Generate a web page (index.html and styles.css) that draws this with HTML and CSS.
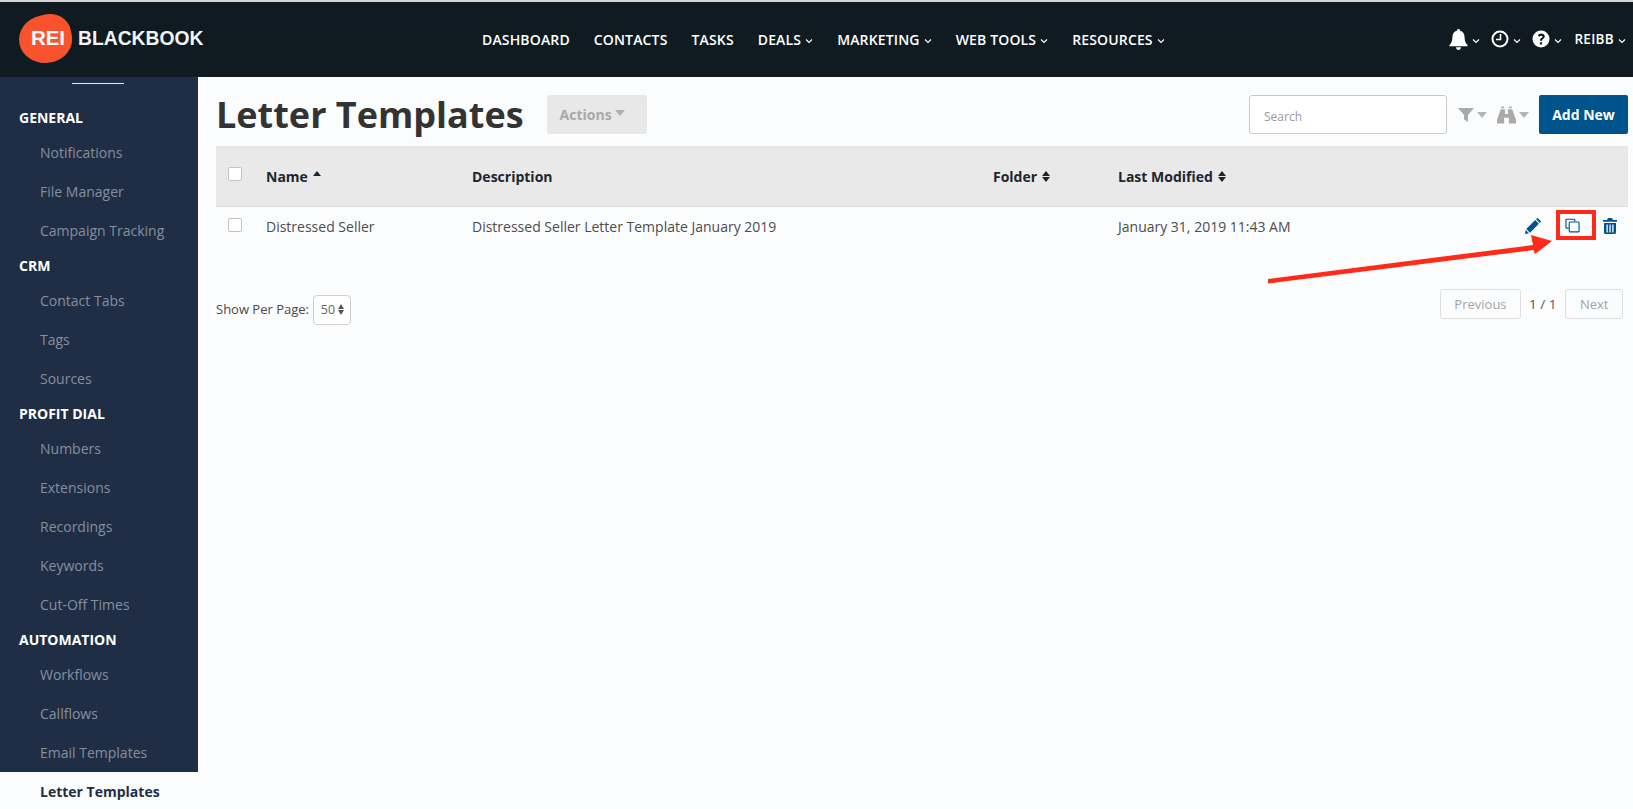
FILE: index.html
```html
<!DOCTYPE html>
<html lang="en">
<head>
<meta charset="utf-8">
<title>Letter Templates</title>
<link rel="stylesheet" href="styles.css">
</head>
<body>
<header class="topbar">
  <a class="logo">
    <span class="logo-badge"><span class="logo-rei">REI</span></span>
    <span class="logo-word">BLACKBOOK</span>
  </a>
  <nav class="mainnav">
    <a>DASHBOARD</a>
    <a>CONTACTS</a>
    <a>TASKS</a>
    <a>DEALS<svg class="chev" viewBox="0 0 8 6"><path d="M1 1.5 4 4.5 7 1.5"/></svg></a>
    <a>MARKETING<svg class="chev" viewBox="0 0 8 6"><path d="M1 1.5 4 4.5 7 1.5"/></svg></a>
    <a>WEB TOOLS<svg class="chev" viewBox="0 0 8 6"><path d="M1 1.5 4 4.5 7 1.5"/></svg></a>
    <a>RESOURCES<svg class="chev" viewBox="0 0 8 6"><path d="M1 1.5 4 4.5 7 1.5"/></svg></a>
  </nav>
  <div class="usernav">
    <a class="u-bell"><svg class="ico-bell" viewBox="0 0 20 22"><path d="M10 0c-1 0-1.600.7-1.600 1.700C5.200 2.500 3.600 5 3.600 8.500c0 4.500-1.300 6.400-3.100 8.200V18h19v-1.300c-1.800-1.800-3.100-3.700-3.100-8.200 0-3.500-1.600-6-4.800-6.800C11.600.7 11 0 10 0zM7.400 19.200c0 1.600 1.200 2.800 2.600 2.800s2.600-1.200 2.600-2.800z"/></svg><svg class="chev" viewBox="0 0 8 6"><path d="M1 1.5 4 4.5 7 1.5"/></svg></a>
    <a class="u-clock"><svg class="ico-round" viewBox="0 0 18 18"><circle class="ring" cx="9" cy="9" r="7.500"/><path class="hand" d="M9.500 4v5.500H5"/></svg><svg class="chev" viewBox="0 0 8 6"><path d="M1 1.5 4 4.500 7 1.5"/></svg></a>
    <a class="u-help"><svg class="ico-round" viewBox="0 0 18 18"><path fill-rule="evenodd" d="M9 .5a8.500 8.500 0 1 0 0 17 8.500 8.500 0 0 0 0-17zM7.900 12.300h2.200v2.200H7.900zM9.200 3.500c2 0 3.500 1.200 3.500 3 0 1.300-.7 2-1.600 2.600-.7.500-1 .8-1 1.600H7.900c0-1.400.5-2 1.400-2.600.8-.5 1.100-.8 1.100-1.400 0-.6-.5-1-1.200-1-.8 0-1.300.4-1.700 1.100L5.700 5.600C6.400 4.300 7.600 3.500 9.200 3.500z"/></svg><svg class="chev" viewBox="0 0 8 6"><path d="M1 1.500 4 4.500 7 1.500"/></svg></a>
    <a class="u-name">REIBB<svg class="chev" viewBox="0 0 8 6"><path d="M1 1.500 4 4.500 7 1.500"/></svg></a>
  </div>
</header>
<div class="shell">
  <aside class="sidebar">
    <div class="side-rule"></div>
    <h4>GENERAL</h4>
    <a>Notifications</a>
    <a>File Manager</a>
    <a>Campaign Tracking</a>
    <h4>CRM</h4>
    <a>Contact Tabs</a>
    <a>Tags</a>
    <a>Sources</a>
    <h4>PROFIT DIAL</h4>
    <a>Numbers</a>
    <a>Extensions</a>
    <a>Recordings</a>
    <a>Keywords</a>
    <a>Cut-Off Times</a>
    <h4>AUTOMATION</h4>
    <a>Workflows</a>
    <a>Callflows</a>
    <a>Email Templates</a>
    <a class="active">Letter Templates</a>
  </aside>
  <main class="content">
    <div class="titlebar">
      <h1>Letter Templates</h1>
      <button class="actions">Actions<span class="caret"></span></button>
      <div class="tools">
        <input class="search" placeholder="Search">
        <span class="tool"><svg class="ico-filter" viewBox="0 0 16 16"><path d="M0 1h16l-6 7v7l-4-2.500V8z"/></svg><span class="caret"></span></span>
        <span class="tool"><svg class="ico-bino" viewBox="0 0 20 18"><path d="M4.500 0h3v2h-3zM12.500 0h3v2h-3zM4 3h4.500v5h3V3H16l4 11v4h-7.500v-6h-5v6H0v-4z"/></svg><span class="caret"></span></span>
        <button class="addnew">Add New</button>
      </div>
    </div>
    <table class="grid">
      <colgroup><col class="c-check"><col class="c-name"><col class="c-desc"><col class="c-folder"><col class="c-mod"><col></colgroup>
      <thead>
        <tr>
          <th><span class="check"></span></th>
          <th><span class="thcell">Name<span class="sort-up"></span></span></th>
          <th>Description</th>
          <th><span class="thcell">Folder<span class="sort"><i></i><b></b></span></span></th>
          <th><span class="thcell">Last Modified<span class="sort"><i></i><b></b></span></span></th>
          <th></th>
        </tr>
      </thead>
      <tbody>
        <tr>
          <td><span class="check check-row"></span></td>
          <td>Distressed Seller</td>
          <td>Distressed Seller Letter Template January 2019</td>
          <td></td>
          <td>January 31, 2019 11:43 AM</td>
          <td>
            <div class="rowicons">
              <svg class="ico-pencil" viewBox="0 0 17 17"><path d="M12.500.8 16.200 4.500 14.800 5.900 11.100 2.200zM10.200 3.100 13.900 6.800 5 15.700 1.300 12zM.7 13 4 16.300 0 17z"/></svg>
              <svg class="ico-copy" viewBox="0 0 16 15"><path d="M10.500 3V1.800a1 1 0 0 0-1-1H2a1 1 0 0 0-1 1v7.500a1 1 0 0 0 1 1h2"/><rect x="4.500" y="3.800" width="10.500" height="10.500" rx="1"/></svg>
              <svg class="ico-trash" viewBox="0 0 14 16"><path fill-rule="evenodd" d="M5 0h4l1 2h4v1.800H0V2h4zM1 5h12v9.500c0 .8-.7 1.500-1.500 1.500h-9C1.700 16 1 15.300 1 14.500zM3.500 6.500v8h1.300v-8zM6.400 6.500v8h1.300v-8zM9.200 6.500v8h1.300v-8z"/></svg>
            </div>
          </td>
        </tr>
      </tbody>
    </table>
    <div class="pagerbar">
      <label class="perpage">Show Per Page:
        <span class="select">50<span class="sort"><i></i><b></b></span></span>
      </label>
      <div class="pager">
        <span class="pbtn">Previous</span>
        <span class="pcount">1 / 1</span>
        <span class="pbtn">Next</span>
      </div>
    </div>
  </main>
</div>
<div class="callout-box"></div>
<svg class="callout-arrow" viewBox="0 0 300 60"><path d="M1 45 266 11 264 1 285 7 268 20 266.500 16 1 49.500z"/></svg>
</body>
</html>
```
FILE: styles.css
```css
* { box-sizing: border-box; }
html, body { margin: 0; height: 100%; }
body {
  font-family: "Open Sans", sans-serif;
  font-size: 14px;
  color: #4a4a4a;
  background: #fbfcfe;
  overflow: hidden;
  position: relative;
}
a { color: inherit; text-decoration: none; }

.topbar {
  height: 77px;
  background: #101b21;
  border-top: 2px solid #d5d5d5;
  display: flex;
  align-items: center;
  color: #fff;
  padding: 0 7px 0 19px;
}
.logo { display: flex; align-items: center; width: 463px; margin-top: -1px; }
.logo-badge {
  position: relative;
  width: 53px;
  height: 48px;
  display: flex;
  align-items: center;
  justify-content: center;
  padding-left: 5px;
}
.logo-badge::before {
  content: "";
  position: absolute;
  inset: 0;
  background: #f9532d;
  border-radius: 50% 42% 48% 52%;
  transform: rotate(-12deg);
}
.logo-rei {
  position: relative;
  color: #fff;
  font: bold 20.500px "Liberation Sans", sans-serif;
  letter-spacing: -.1px;
  margin-bottom: 3px;
}
.logo-word {
  font: bold 19.300px "Liberation Sans", sans-serif;
  margin-left: 6px;
  margin-top: -1px;
  color: #f4f4f4;
}
.mainnav { display: flex; gap: 24px; font-size: 14px; font-weight: 600; letter-spacing: .15px; }
.mainnav a, .usernav a { display: flex; align-items: center; white-space: nowrap; }
.chev { width: 8px; height: 6px; margin-left: 4px; margin-top: 3px; fill: none; stroke: #fff; stroke-width: 1.100; }
.usernav { margin-left: auto; display: flex; align-items: center; gap: 11px; font-size: 13.500px; font-weight: 600; letter-spacing: .3px; margin-top: -1px; }
.usernav .u-name { margin-left: 1px; }
.usernav svg:not(.chev) { fill: #fff; }
.ico-bell { width: 19px; height: 21px; }
.ico-round { width: 18px; height: 18px; }
.usernav .ico-round .ring { fill: none; stroke: #fff; stroke-width: 2; }
.usernav .ico-round .hand { fill: none; stroke: #fff; stroke-width: 1.600; }

.shell { display: flex; height: calc(100% - 77px); }
.sidebar {
  width: 198px;
  flex: none;
  background: #1f2e45;
  color: #868e9c;
  display: flex;
  flex-direction: column;
}
.side-rule { flex: none; width: 52px; height: 1px; background: #e8e8e8; margin: 6px 0 0 72px; }
.sidebar h4 {
  flex: none;
  margin: 0;
  height: 31px;
  padding-left: 19px;
  font-size: 14px;
  line-height: 31px;
  font-weight: 700;
  color: #fff;
}
.sidebar h4:first-of-type { margin-top: 17.500px; }
.sidebar a {
  height: 39px;
  line-height: 39px;
  padding-left: 40px;
  font-size: 14px;
  flex: none;
}
.sidebar a.active { background: #fbfcfe; color: #1f2e45; font-weight: 700; }

.content { flex: 1; min-width: 0; padding: 18px 5px 0 18px; }
.titlebar { display: flex; align-items: center; height: 39px; }
h1 { margin: 0 23px 0 0; font-size: 36px; font-weight: 700; color: #333; line-height: 39px; letter-spacing: 0; }
.actions {
  width: 100px;
  height: 39px;
  border: 0;
  border-radius: 2px;
  background: #e8e8e8;
  color: #a8a8a8;
  font: 700 14px "Open Sans", sans-serif;
  text-align: left;
  padding: 0 0 0 13px;
}
.caret {
  display: inline-block;
  width: 0;
  height: 0;
  border: 5.500px solid transparent;
  border-top: 6px solid #b0b0b0;
  border-bottom: 0;
  margin-left: 3px;
  vertical-align: 2px;
}
.actions .caret { vertical-align: 4px; }
.tools { margin-left: auto; display: flex; align-items: center; }
.search {
  width: 198px;
  height: 39px;
  border: 1px solid #c9c9c9;
  border-radius: 3px;
  background: #fff;
  padding: 3px 14px 0;
  font: 12px "Open Sans", sans-serif;
  margin-right: 11px;
}
.search::placeholder { color: #9a9a9a; }
.tool { display: flex; align-items: center; margin-right: 10px; }
.tool .caret { border-top-color: #b5b5b5; margin-left: 3px; }
.ico-filter { width: 16px; height: 16px; fill: #aaa; }
.ico-bino { width: 19px; height: 18px; fill: #aaa; }
.addnew {
  width: 89px;
  height: 39px;
  border: 0;
  border-radius: 2px;
  background: #00548c;
  color: #fff;
  font: 700 14px "Open Sans", sans-serif;
}

.grid { width: 100%; margin-top: 12px; border-collapse: collapse; table-layout: fixed; }
.c-check { width: 50px; }
.c-name { width: 206px; }
.c-desc { width: 521px; }
.c-folder { width: 125px; }
.c-mod { width: 300px; }
.grid th {
  height: 60px;
  background: #e9e9e9;
  border-bottom: 1px solid #dcdcdc;
  color: #1d2530;
  text-align: left;
  font-weight: 700;
  padding: 2px 0 0;
}
.grid td { height: 41px; padding: 0; vertical-align: middle; color: #4d4d4d; }
.grid tr > :first-child { padding-left: 12px; }
.check {
  display: block;
  width: 14px;
  height: 14px;
  border: 1px solid #c4c4c4;
  border-radius: 2px;
  background: #fff;
  margin-top: -6px;
}
.check-row { margin-top: -4px; }
.thcell { display: inline-flex; align-items: center; gap: 5px; }
.sort-up {
  display: block;
  width: 0; height: 0;
  border-style: solid;
  border-color: transparent transparent #1d2530;
  border-width: 0 4.500px 5px;
  margin-top: -6px;
}
.sort { display: inline-flex; flex-direction: column; gap: 1px; }
.sort i, .sort b {
  display: block; width: 0; height: 0;
  border-style: solid;
  border-color: transparent;
}
.sort i { border-bottom-color: #1d2530; border-width: 0 4.500px 5px; }
.sort b { border-top-color: #1d2530; border-width: 5px 4.500px 0; }
.rowicons { display: flex; justify-content: flex-end; align-items: center; gap: 23px; padding-right: 11px; margin-top: -2px; }
.ico-pencil { width: 17px; height: 17px; fill: #00548c; }
.ico-copy { width: 15px; height: 15px; fill: none; stroke: #00548c; stroke-width: 1.200; }
.ico-trash { width: 14px; height: 16px; fill: #00548c; }

.pagerbar { display: flex; justify-content: space-between; align-items: flex-start; margin-top: 42px; padding-right: 5px; }
.perpage { display: flex; align-items: center; gap: 4px; font-size: 13px; height: 29px; margin-top: 5px; }
.select {
  width: 38px;
  height: 30px;
  margin-top: 2px;
  border: 1px solid #cfcfcf;
  border-radius: 4px;
  background: #fff;
  display: flex;
  align-items: center;
  justify-content: center;
  gap: 3px;
  padding-left: 1px;
  font-size: 12.500px;
  color: #666;
}
.select .sort { gap: 1px; }
.select .sort i { border-bottom-color: #555; border-width: 0 3px 5px; }
.select .sort b { border-top-color: #555; border-width: 5px 3px 0; }
.pager { display: flex; align-items: center; gap: 8px; }
.pager .pcount + .pbtn { margin-left: 1px; }
.pbtn {
  height: 30px;
  padding: 0 13.500px;
  border: 1px solid #dedede;
  border-radius: 3px;
  line-height: 28px;
  font-size: 13px;
  color: #a3a3a3;
  background: #fbfcfe;
}
.pcount { font-size: 13.500px; color: #555; }

.callout-box {
  position: absolute;
  left: 1556px;
  top: 210px;
  width: 40px;
  height: 30px;
  border: 4px solid #ff2a17;
}
.callout-arrow {
  position: absolute;
  left: 1267px;
  top: 234px;
  width: 300px;
  height: 60px;
  fill: #ff2a17;
}
```
